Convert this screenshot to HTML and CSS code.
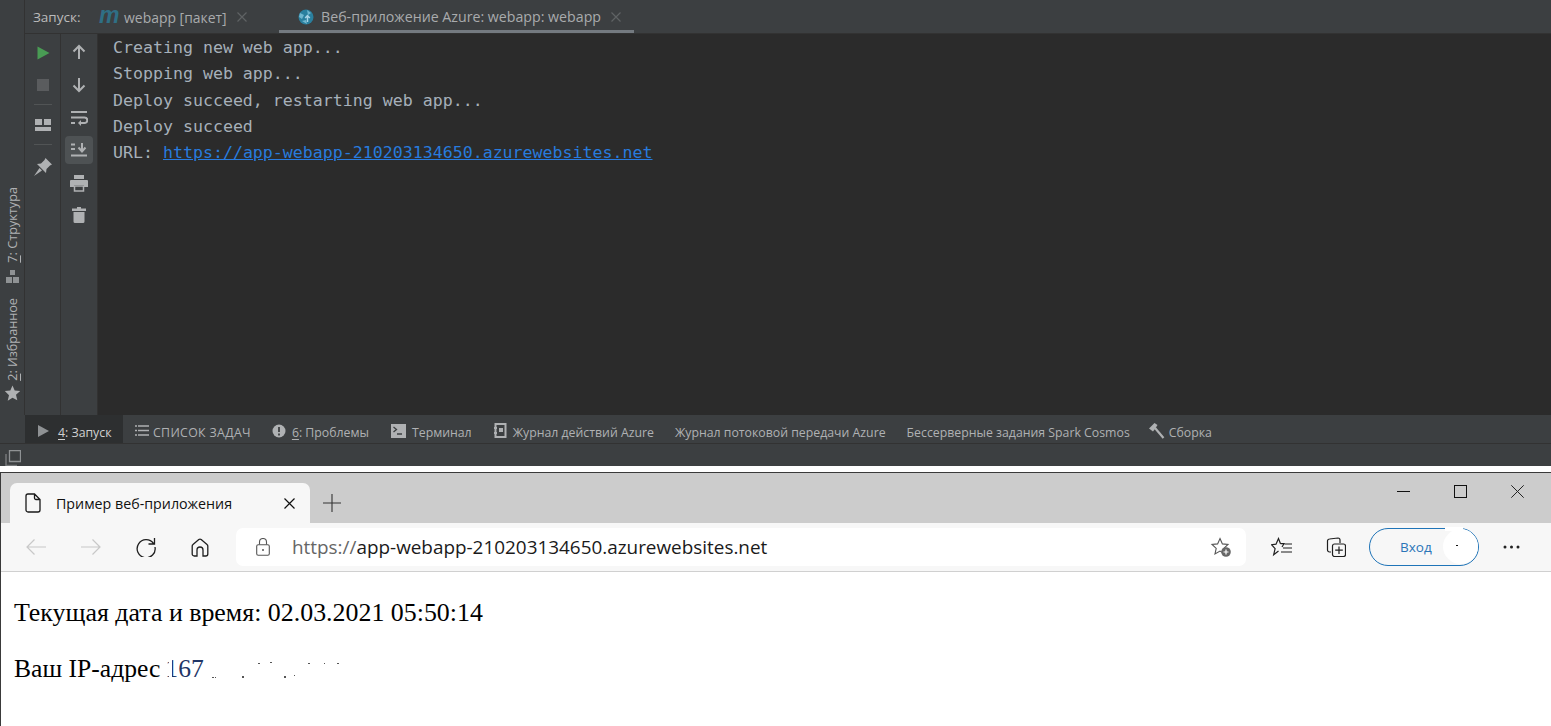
FILE: index.html
```html
<!DOCTYPE html>
<html lang="ru">
<head>
<meta charset="utf-8">
<title>Веб-приложение</title>
<link rel="stylesheet" href="styles.css">
</head>
<body>
<section class="ide">
  <div class="ide-main">
    <aside class="stripe">
      <div class="stripe-item s-fav">
        <svg class="stripe-ic" width="17" height="16" viewBox="0 0 16 16"><path d="M8 .5l2.200 5.100 5.500.5-4.200 3.600 1.300 5.500L8 12.800l-4.800 2.900 1.300-5.500L.3 6.100l5.500-.5z" fill="#afb1b3"/></svg>
        <span class="vtext"><u>2</u>: Избранное</span>
      </div>
      <div class="stripe-item s-str">
        <svg class="stripe-ic" width="13" height="13" viewBox="0 0 13 13"><path d="M4 0h5v5H4zM0 7h6v6H0zM7 7h6v6H7z" fill="#8f9294"/></svg>
        <span class="vtext"><u>7</u>: Структура</span>
      </div>
    </aside>
    <div class="run">
      <div class="run-tabs">
        <span class="run-label">Запуск:</span>
        <div class="run-tab t1">
          <span class="maven">m</span>
          <span>webapp [пакет]</span>
          <svg class="tab-x" width="10" height="10" viewBox="0 0 10 10"><path d="M.5.5l9 9M9.500.5l-9 9" stroke="#5f6264" stroke-width="1.200"/></svg>
        </div>
        <div class="run-tab t2">
          <svg width="16" height="16" viewBox="0 0 16 16"><circle cx="8" cy="8" r="7.500" fill="#2a7f9e"/><path d="M2 4l4 2-2 4-3-2zM9 1l4 3-3 2zM4 12l4-1 1 4z" fill="#6fb6cf"/><path d="M9.500 13V7M7.200 9l2.300-2.400L11.800 9" fill="none" stroke="#a9d3e6" stroke-width="1.500"/></svg>
          <span>Веб-приложение Azure: webapp: webapp</span>
          <svg class="tab-x" width="10" height="10" viewBox="0 0 10 10"><path d="M.5.5l9 9M9.500.5l-9 9" stroke="#5f6264" stroke-width="1.200"/></svg>
        </div>
      </div>
      <div class="run-body">
        <div class="tools tools-a">
          <button class="tool"><svg width="16" height="16" viewBox="0 0 16 16"><path d="M2.500 1.500l12 6.500-12 6.500z" fill="#499c54"/></svg></button>
          <button class="tool"><svg width="14" height="14" viewBox="0 0 14 14"><rect x="1" y="1" width="12" height="12" fill="#5a5c5e"/></svg></button>
          <hr class="tool-sep">
          <button class="tool tool-lay"><svg width="16" height="14" viewBox="0 0 16 14"><path d="M0 1h7v6H0zM9 1h7v6H9zM0 9h16v4H0z" fill="#afb1b3"/></svg></button>
          <hr class="tool-sep">
          <button class="tool tool-pin"><svg width="18" height="18" viewBox="0 0 18 18"><path d="M11.500 0L18 6.500l-2 1-3.500 3.500-.5 4-9-9 4-.5L10.500 2z" fill="#afb1b3"/><path d="M5.500 10L0 18l8-5.500z" fill="#afb1b3"/></svg></button>
        </div>
        <div class="tools tools-b">
          <button class="tool"><svg width="14" height="16" viewBox="0 0 14 16"><path d="M7 15V2M1.500 7.500L7 2l5.500 5.500" fill="none" stroke="#afb1b3" stroke-width="2"/></svg></button>
          <button class="tool"><svg width="14" height="16" viewBox="0 0 14 16"><path d="M7 1v13M1.500 8.500L7 14l5.500-5.500" fill="none" stroke="#afb1b3" stroke-width="2"/></svg></button>
          <button class="tool"><svg width="17" height="16" viewBox="0 0 17 16"><path d="M0 2h16M0 13h4" stroke="#afb1b3" stroke-width="2" fill="none"/><path d="M0 7.500h13.500a2.500 2.500 0 0 1 0 5.500H8" stroke="#afb1b3" stroke-width="2" fill="none"/><path d="M10 10l-3 3 3 3z" fill="#afb1b3"/></svg></button>
          <button class="tool tool-on"><svg width="16" height="14" viewBox="0 0 16 14"><path d="M0 1.500h4M0 6h4M0 12.500h16" stroke="#afb1b3" stroke-width="2" fill="none"/><path d="M11 0v7M7.500 4.500L11 8.500l3.500-4" stroke="#afb1b3" stroke-width="2" fill="none"/></svg></button>
          <button class="tool"><svg width="18" height="17" viewBox="0 0 18 17"><path d="M4 0h10v4H4zM1 5h16a1 1 0 0 1 1 1v6h-4v-2H4v2H0V6a1 1 0 0 1 1-1z" fill="#afb1b3"/><path d="M4.500 11h9v5h-9z" fill="none" stroke="#afb1b3" stroke-width="1.500"/></svg></button>
          <button class="tool tool-trash"><svg width="14" height="16" viewBox="0 0 14 16"><path d="M5 0h4v1.500h5V4H0V1.500h5zM1.500 5h11v9.500a1.500 1.500 0 0 1-1.500 1.500H3a1.500 1.500 0 0 1-1.500-1.500z" fill="#afb1b3"/></svg></button>
        </div>
        <div class="console">
          <div>Creating new web app...</div>
          <div>Stopping web app...</div>
          <div>Deploy succeed, restarting web app...</div>
          <div>Deploy succeed</div>
          <div>URL: <a href="#">https://app-webapp-210203134650.azurewebsites.net</a></div>
        </div>
      </div>
    </div>
  </div>
  <nav class="bottom-tabs">
    <div class="btab btab-on"><svg width="11" height="12" viewBox="0 0 11 12"><path d="M0 0l11 6-11 6z" fill="#8f9294"/></svg><span><u>4</u>: Запуск</span></div>
    <div class="btab btab-list"><svg width="14" height="11" viewBox="0 0 14 11"><path d="M0 1h2M3 1h11M0 5.500h2M3 5.500h11M0 10h2M3 10h11" stroke="#afb1b3" stroke-width="1.500"/></svg><span class="caps">СПИСОК ЗАДАЧ</span></div>
    <div class="btab btab-wide"><svg width="14" height="14" viewBox="0 0 14 14"><circle cx="7" cy="7" r="6.500" fill="#afb1b3"/><path d="M7 3v5M7 9.500v2" stroke="#3c3f41" stroke-width="1.800"/></svg><span><u>6</u>: Проблемы</span></div>
    <div class="btab btab-wide"><svg width="15" height="14" viewBox="0 0 15 14"><rect width="15" height="14" fill="#afb1b3"/><path d="M2.500 3l3 2.500-3 2.500M6 10h5" stroke="#3c3f41" stroke-width="1.300" fill="none"/></svg><span>Терминал</span></div>
    <div class="btab"><svg width="13" height="15" viewBox="0 0 13 15"><path d="M1.500 1h10v13h-10z" fill="none" stroke="#afb1b3" stroke-width="2"/><path d="M0 4h3v2H0zM0 9h3v2H0zM5 5h4v4H5z" fill="#afb1b3"/></svg><span>Журнал действий Azure</span></div>
    <div class="btab"><span>Журнал потоковой передачи Azure</span></div>
    <div class="btab btab-narrow"><span>Бессерверные задания Spark Cosmos</span></div>
    <div class="btab btab-tight"><svg width="16" height="16" viewBox="0 0 16 16"><path d="M0 5.500L5.500 0 8.500 2 6 6 4 8.500z" fill="#afb1b3"/><path d="M6 5l8.500 10" stroke="#afb1b3" stroke-width="2.200"/></svg><span>Сборка</span></div>
  </nav>
  <footer class="status">
    <svg width="16" height="16" viewBox="0 0 16 16"><path d="M4.500.5h11v11h-11z" fill="none" stroke="#8f9294" stroke-width="1.300"/><path d="M1 4v11.500h11" fill="none" stroke="#75787a" stroke-width="1.500"/></svg>
  </footer>
</section>

<section class="browser">
  <div class="tabstrip">
    <div class="btab-page">
      <svg width="16" height="20" viewBox="0 0 16 20"><path d="M3 1h6.500L15 6.500V17a2 2 0 0 1-2 2H3a2 2 0 0 1-2-2V3a2 2 0 0 1 2-2zM9.500 1v4a1.500 1.500 0 0 0 1.500 1.500h4" fill="none" stroke="#1a1a1a" stroke-width="1.300"/></svg>
      <span class="page-title">Пример веб-приложения</span>
      <svg class="page-x" width="11" height="11" viewBox="0 0 11 11"><path d="M.5.500l10 10M10.500.500l-10 10" stroke="#111" stroke-width="1.200"/></svg>
    </div>
    <svg class="newtab" width="18" height="18" viewBox="0 0 18 18"><path d="M9 0v18M0 9h18" stroke="#333" stroke-width="1.100"/></svg>
    <div class="winctl">
      <svg width="13" height="13" viewBox="0 0 13 13"><path d="M0 6.500h13" stroke="#111" stroke-width="1"/></svg>
      <svg width="13" height="13" viewBox="0 0 13 13"><rect x=".5" y=".5" width="12" height="12" fill="none" stroke="#111"/></svg>
      <svg width="13" height="13" viewBox="0 0 13 13"><path d="M.3.300l12.400 12.400M12.700.300L.3 12.700" stroke="#222" stroke-width="1"/></svg>
    </div>
  </div>
  <div class="navbar">
    <svg class="nav-ic nav-back" width="20" height="16" viewBox="0 0 20 16"><path d="M20 8H1M8.500.500L1 8l7.500 7.500" fill="none" stroke="#c8c8c8" stroke-width="1.200"/></svg>
    <svg class="nav-ic nav-fwd" width="20" height="16" viewBox="0 0 20 16"><path d="M0 8h19M11.500.500L19 8l-7.500 7.500" fill="none" stroke="#c8c8c8" stroke-width="1.200"/></svg>
    <svg class="nav-ic nav-rel" width="20" height="20" viewBox="0 0 20 20"><path d="M17.500 6.500A9 9 0 1 0 19 10M18.500 1v6h-6" fill="none" stroke="#1f1f1f" stroke-width="1.300"/></svg>
    <svg class="nav-ic nav-home" width="18" height="19" viewBox="0 0 18 19"><path d="M7.800 1.500a2 2 0 0 1 2.400 0l5.800 5a2 2 0 0 1 .8 1.500V16a2 2 0 0 1-2 2h-2.800V12a3 3 0 0 0-6 0v6H3.200a2 2 0 0 1-2-2V8a2 2 0 0 1 .8-1.500z" fill="none" stroke="#1f1f1f" stroke-width="1.300"/></svg>
    <div class="omnibox">
      <svg class="lock" width="14" height="18" viewBox="0 0 14 18"><rect x=".7" y="6.700" width="12.600" height="10.600" rx="1.500" fill="none" stroke="#555" stroke-width="1.100"/><path d="M3.500 6.500V4a3.500 3.500 0 0 1 7 0v2.500" fill="none" stroke="#555" stroke-width="1.100"/><circle cx="7" cy="12" r="1" fill="#555"/></svg>
      <span class="url"><span class="url-dim">https://</span>app-webapp-210203134650.azurewebsites.net</span>
      <svg class="addfav" width="22" height="21" viewBox="0 0 22 21"><path d="M10 1.500l2.400 5.400 5.600.6-4.200 3.900 1.200 5.600-5-2.900-5 2.900 1.200-5.600L2 7.500l5.600-.6z" fill="none" stroke="#555" stroke-width="1.100"/><circle cx="16" cy="15" r="4.800" fill="#666"/><path d="M16 12.500v5M13.500 15h5" stroke="#fff" stroke-width="1.200"/></svg>
    </div>
    <svg class="nav-ic nav-fav" width="21" height="20" viewBox="0 0 21 20"><path d="M9.500 6.700l-2-5.200-2.500 5.700-4.500.5 3.600 4-1.400 6 4.800-3.700M9.500 6.700H13L11 10" fill="none" stroke="#1f1f1f" stroke-width="1.200"/><path d="M13.500 7H21M12 11h9M10 15h11" stroke="#1f1f1f" stroke-width="1.200"/></svg>
    <svg class="nav-ic nav-col" width="20" height="20" viewBox="0 0 20 20"><path d="M5 15H3.500A2 2 0 0 1 1.500 13V4a2 2 0 0 1 2-2L12 1a2 2 0 0 1 2 2v3" fill="none" stroke="#1f1f1f" stroke-width="1.200"/><rect x="6.500" y="7" width="13" height="12.500" rx="2" fill="none" stroke="#1f1f1f" stroke-width="1.200"/><path d="M13 9.500v7.500M9.200 13.200h7.600" stroke="#1f1f1f" stroke-width="1.200"/></svg>
    <div class="signin">
      <span>Вход</span>
      <span class="avatar-mask"><span class="speck"></span></span>
    </div>
    <svg class="nav-ic nav-more" width="17" height="4" viewBox="0 0 17 4"><circle cx="2" cy="2" r="1.500" fill="#222"/><circle cx="8.500" cy="2" r="1.500" fill="#222"/><circle cx="15" cy="2" r="1.500" fill="#222"/></svg>
  </div>
  <main class="page">
    <p>Текущая дата и время: 02.03.2021 05:50:14</p>
    <p class="ip">Ваш IP-адрес <span class="ip-val">167</span><svg class="ip-specks" width="130" height="18" viewBox="0 0 130 18"><path d="M0 16h2v1H0zM3 16h1v1H3zM30 15h2v2h-2zM46 2h2v1h-2zM58 1h2v1h-2zM72 15h2v2h-2zM82 14h1v1h-1zM96 2h2v1h-2zM112 2h1v1h-1zM125 2h2v1h-2z" fill="#555"/></svg></p>
  </main>
</section>
</body>
</html>
```

FILE: styles.css
```css
* { box-sizing: border-box; }
html, body { margin: 0; padding: 0; }
body { width: 1551px; height: 726px; overflow: hidden; background: #fff; display: flex; flex-direction: column; }
svg { display: block; flex: none; }

.ide { height: 466px; flex: none; display: flex; flex-direction: column; background: #3c3f41; font-family: "Open Sans", "Noto Sans", sans-serif; font-size: 12.300px; color: #bbb; }
.ide-main { flex: 1; min-height: 0; display: flex; }

.stripe { width: 25px; flex: none; border-right: 1px solid #323232; display: flex; flex-direction: column-reverse; padding-bottom: 14px; }
.stripe-item { display: flex; flex-direction: column-reverse; align-items: center; color: #afb1b3; }
.s-fav { gap: 4px; }
.s-str { gap: 7px; margin-bottom: 15px; }
.stripe-ic { flex: none; }
.vtext { writing-mode: vertical-rl; transform: rotate(180deg); font-size: 12.700px; line-height: 15px; white-space: nowrap; margin-left: 1px; }
.vtext u { text-underline-offset: 1px; }

.run { flex: 1; min-width: 0; display: flex; flex-direction: column; }
.run-tabs { height: 34px; flex: none; border-bottom: 1px solid #323232; display: flex; align-items: center; padding-left: 8px; }
.run-label { width: 66px; flex: none; color: #bbb; font-size: 13.500px; padding-top: 1px; }
.run-tab { height: 33px; display: flex; align-items: center; color: #a9abad; white-space: nowrap; flex: none; }
.t1 { width: 180px; gap: 5px; font-size: 13.950px; padding-top: 1px; }
.t1 .maven { font: italic bold 23px/16px "Liberation Sans", sans-serif; color: #2f6f85; width: 20px; margin-top: -5px; }
.t1 .tab-x { margin-left: 5px; }
.t2 { width: 355px; gap: 7px; border-bottom: 3px solid #747a80; padding: 3px 0 0 19px; font-size: 14.200px; }
.t2 .tab-x { margin-left: 3px; }

.run-body { flex: 1; min-height: 0; display: flex; }
.tools { width: 36px; flex: none; border-right: 1px solid #323232; display: flex; flex-direction: column; align-items: center; padding-top: 3px; }
.tools-b { width: 37px; gap: 5px; padding-top: 4px; }
.tools-b .tool { height: 28px; }
.tool { width: 28px; height: 28px; padding: 0; border: 0; background: transparent; border-radius: 4px; display: flex; align-items: center; justify-content: center; flex: none; }
.tools-a .tool { height: 32px; }
.tool-lay { margin-top: 1px; }
.tool-pin { margin-top: 3px; }
.tools-b .tool-on { margin-top: -1px; background: #4e5254; }
.tools-b .tool-trash { margin-top: -1px; }
.tool-sep { width: 18px; height: 1px; border: 0; background: #515455; margin: 3px 0; flex: none; }
.console { flex: 1; min-width: 0; background: #2b2b2b; padding: 1px 0 0 15px; font: 16.600px/26.300px "DejaVu Sans Mono", "Liberation Mono", monospace; color: #a6b0ba; white-space: nowrap; }
.console a { color: #287bde; text-decoration: underline; }

.bottom-tabs { height: 29px; flex: none; border-bottom: 1px solid #323232; display: flex; background: #3c3f41; padding-left: 25px; }
.btab { display: flex; align-items: center; gap: 6px; height: 28px; margin-right: 21px; color: #afb1b3; white-space: nowrap; padding-top: 7px; flex: none; }
.btab svg { margin-top: -4px; }
.btab u { text-underline-offset: 2px; }
.caps { letter-spacing: .35px; }
.btab-on { width: 98px; background: #2d2f30; color: #d0d0d0; padding-left: 13px; margin-right: 12px; gap: 9px; }
.btab-list { gap: 4px; }
.btab-wide { margin-right: 22px; }
.btab-narrow { margin-right: 19px; }
.btab-tight { gap: 4px; }
.status { height: 22px; flex: none; display: flex; align-items: center; padding: 5px 0 0 5px; }

.browser { flex: 1; min-height: 0; display: flex; flex-direction: column; margin-top: 6px; border-top: 1px solid #3a3a3a; border-left: 1px solid #3a3a3a; }
.tabstrip { height: 50px; flex: none; background: #cccccc; display: flex; align-items: flex-start; padding: 10px 0 0 9px; }
.btab-page { width: 300px; height: 40px; background: #f7f7f7; border-radius: 7px 7px 0 0; display: flex; align-items: center; padding: 0 15px; flex: none; }
.page-title { margin-left: 15px; font: 14.250px "Open Sans", "Noto Sans", sans-serif; color: #111; flex: 1; white-space: nowrap; }
.newtab { margin: 11px 0 0 13px; }
.winctl { margin-left: auto; display: flex; gap: 44px; padding: 2px 27px 0 0; }

.navbar { height: 49px; flex: none; background: #f7f7f7; border-bottom: 1px solid #d0d0d0; display: flex; align-items: center; padding-left: 25px; }
.nav-fwd, .nav-rel, .nav-home { margin-left: 35px; }
.omnibox { width: 1010px; height: 38px; margin-left: 27px; background: #fff; border-radius: 7px; flex: none; display: flex; align-items: center; padding: 0 14px 0 20px; }
.url { margin-left: 22px; font: 18.900px "Open Sans", "Noto Sans", sans-serif; color: #1a1a1a; white-space: nowrap; flex: 1; }
.url-dim { color: #666; }
.nav-fav { margin-left: 25px; }
.nav-col { margin-left: 34px; }
.signin { margin-left: 23px; width: 110px; height: 38px; border: 1.500px solid #1f74b8; border-radius: 19px; display: flex; align-items: center; padding-left: 30px; font: 13.500px "Open Sans", "Noto Sans", sans-serif; color: #2b75b8; position: relative; flex: none; }
.avatar-mask { position: absolute; right: 0; top: 0; width: 35px; height: 35px; background: #fff; border-radius: 50%; }
.avatar-mask::before { content: ""; position: absolute; left: 2px; top: -2px; width: 18px; height: 4px; background: #fff; }
.speck { position: absolute; left: 13px; top: 16px; width: 2px; height: 1px; background: #111; }
.nav-more { margin-left: 24px; }

.page { flex: 1; background: #fff; padding: 26px 0 0 13px; font: 25.900px/30px "Liberation Serif", serif; color: #000; }
.page p { margin: 0 0 26px; white-space: nowrap; }
.ip { display: flex; align-items: center; gap: 6px; font-size: 25.600px; }
.ip-val { color: #1f3566; position: relative; margin-left: -1px; }
.ip-val::after { content: ""; position: absolute; left: 4px; top: 4px; width: 3px; height: 24px; background: #fff; }
.ip-specks { margin-left: 2px; margin-top: 1px; }
```
